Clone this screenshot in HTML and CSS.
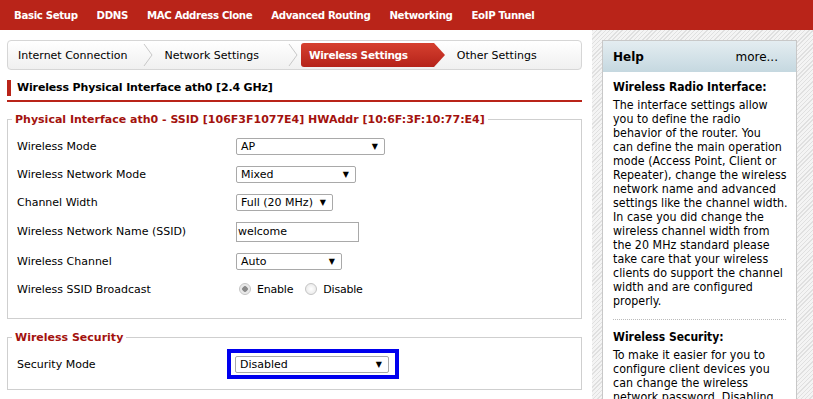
FILE: index.html
```html
<!DOCTYPE html>
<html>
<head>
<meta charset="utf-8">
<link rel="stylesheet" href="styles.css">
</head>
<body>
<div class="topnav">
  <a>Basic Setup</a>
  <a>DDNS</a>
  <a>MAC Address Clone</a>
  <a>Advanced Routing</a>
  <a>Networking</a>
  <a>EoIP Tunnel</a>
</div>
<div class="layout">
  <div class="main">
    <div class="crumbs">
      <span class="crumb c1">Internet Connection</span>
      <svg class="chev" width="10" height="26" viewBox="0 0 10 26"><polyline points="1,2 9,13 1,24" fill="none" stroke="#c8c8c8" stroke-width="1"/></svg>
      <span class="crumb c2">Network Settings</span>
      <svg class="chev" width="10" height="26" viewBox="0 0 10 26"><polyline points="1,2 9,13 1,24" fill="none" stroke="#c8c8c8" stroke-width="1"/></svg>
      <span class="active">
        <span class="active-body">Wireless Settings</span>
        <svg class="active-tip" width="12" height="24" viewBox="0 0 12 24"><defs><linearGradient id="tg" x1="0" y1="0" x2="0" y2="1"><stop offset="0" stop-color="#d6402f"/><stop offset="1" stop-color="#b5231a"/></linearGradient></defs><polygon points="0,0 1,0 12,12 1,24 0,24" fill="url(#tg)"/></svg>
      </span>
      <span class="crumb c4">Other Settings</span>
    </div>

    <h2 class="heading">Wireless Physical Interface ath0 [2.4 GHz]</h2>

    <fieldset class="fs fs1">
      <legend>Physical Interface ath0 - SSID [106F3F1077E4] HWAddr [10:6F:3F:10:77:E4]</legend>
      <div class="row"><span class="label">Wireless Mode</span><span class="sel w149"><span>AP</span><span class="arr">▼</span></span></div>
      <div class="row"><span class="label">Wireless Network Mode</span><span class="sel w120"><span>Mixed</span><span class="arr">▼</span></span></div>
      <div class="row"><span class="label">Channel Width</span><span class="sel w97"><span>Full (20 MHz)</span><span class="arr">▼</span></span></div>
      <div class="row r-input"><span class="label">Wireless Network Name (SSID)</span><span class="txt">welcome</span></div>
      <div class="row"><span class="label">Wireless Channel</span><span class="sel w106"><span>Auto</span><span class="arr">▼</span></span></div>
      <div class="row"><span class="label">Wireless SSID Broadcast</span>
        <span class="radios"><span class="radio on"></span><span class="rlabel">Enable</span><span class="radio"></span><span class="rlabel">Disable</span></span>
      </div>
    </fieldset>

    <fieldset class="fs fs2">
      <legend>Wireless Security</legend>
      <div class="row"><span class="label">Security Mode</span><span class="focus"><span class="sel w154"><span>Disabled</span><span class="arr">▼</span></span></span></div>
    </fieldset>
  </div>
  <div class="side">
    <div class="help">
      <div class="help-head"><b>Help</b><span>more...</span></div>
      <div class="help-body">
        <h3>Wireless Radio Interface:</h3>
        <p>The interface settings allow<br>you to define the radio<br>behavior of the router. You<br>can define the main operation<br>mode (Access Point, Client or<br>Repeater), change the wireless<br>network name and advanced<br>settings like the channel width.<br>In case you did change the<br>wireless channel width from<br>the 20 MHz standard please<br>take care that your wireless<br>clients do support the channel<br>width and are configured<br>properly.</p>
        <hr>
        <h3>Wireless Security:</h3>
        <p>To make it easier for you to<br>configure client devices you<br>can change the wireless<br>network password. Disabling<br>security is not recommended.</p>
      </div>
    </div>
  </div>
</div>
</body>
</html>
```

FILE: styles.css
```css
html, body {
  margin: 0;
  padding: 0;
  background: #fff;
  overflow: hidden;
}
body {
  font-family: "DejaVu Sans", Verdana, sans-serif;
  font-size: 11px;
  color: #000;
  width: 813px;
  height: 399px;
}
.topnav {
  height: 30px;
  background: #b92419;
  display: flex;
  align-items: center;
  padding-left: 14px;
}
.topnav a {
  color: #fff;
  font-weight: bold;
  font-size: 10.2px;
  letter-spacing: -0.35px;
  margin-right: 19px;
}
.layout {
  display: flex;
  height: 369px;
}
.main {
  width: 575px;
  margin-left: 7px;
  padding-top: 10px;
}
.side {
  width: 221px;
  margin-left: 10px;
  padding: 10px 0 0 10px;
  box-sizing: border-box;
  background: repeating-linear-gradient(-45deg, #f4f4f4 0 2px, #e0e0e0 2px 3px);
}
.crumbs {
  height: 30px;
  box-sizing: border-box;
  border: 1px solid #d6d6d6;
  border-radius: 4px;
  background: linear-gradient(#ffffff, #f0f0f0);
  display: flex;
  align-items: center;
  padding-left: 10px;
}
.crumb { white-space: nowrap; }
.c1 { margin-right: 16px; }
.chev { flex: none; }
.c2 { margin-left: 11px; margin-right: 29px; }
.active {
  display: flex;
  align-items: center;
  margin-left: 3px;
}
.active-body {
  background: linear-gradient(#d6402f, #b5231a);
  color: #fff;
  font-weight: bold;
  font-size: 10.5px;
  height: 24px;
  line-height: 24px;
  padding: 0 25px 0 8px;
  border-radius: 3px 0 0 3px;
  letter-spacing: -0.3px;
}
.active-tip { margin-left: 0; flex: none; }
.c4 { margin-left: 12px; }

.heading {
  margin: 10px 0 0 0;
  font-size: 11px;
  font-weight: bold;
  letter-spacing: -0.15px;
  height: 16px;
  line-height: 16px;
  padding: 0 0 4px 10px;
  border-bottom: 2px solid #b92419;
  background: linear-gradient(#b92419, #b92419) no-repeat 0 0 / 4px 16px;
}
.fs {
  border: 1px solid #cfcfcf;
  margin: 0;
  padding: 0 0 0 9px;
}
.fs legend {
  color: #a3120e;
  font-weight: bold;
  padding: 0 3px;
  margin-left: -5px;
}
.fs1 { margin-top: 11px; padding-top: 6px; padding-bottom: 15px; }
.fs2 { margin-top: 12px; padding-top: 6px; padding-bottom: 11px; }
.row {
  display: flex;
  align-items: center;
  height: 28px;
}
.r-input { height: 31px; }
.label { width: 219px; flex: none; }
.sel {
  display: flex;
  justify-content: space-between;
  align-items: center;
  height: 17px;
  box-sizing: border-box;
  border: 1px solid #a9a9a9;
  border-radius: 2px;
  background: #fff;
  padding: 0 6px 0 4px;
}
.arr { font-size: 8px; }
.w149 { width: 149px; }
.w120 { width: 120px; }
.w97 { width: 97px; }
.w106 { width: 106px; }
.w154 { width: 154px; }
.txt {
  width: 123px;
  height: 20px;
  box-sizing: border-box;
  border: 1px solid #a9a9a9;
  padding: 1px 1px;
  line-height: 16px;
}
.radios { display: flex; align-items: center; margin-left: 3px; }
.radio {
  width: 12px;
  height: 12px;
  border-radius: 50%;
  box-sizing: border-box;
  border: 1px solid #c4c4c4;
  background: radial-gradient(#ffffff, #e4e4e4);
  display: inline-block;
}
.radio.on {
  background: radial-gradient(circle, #8a8a8a 0 2.5px, #e4e4e4 3px, #f4f4f4);
}
.rlabel { margin-left: 6px; margin-right: 12px; letter-spacing: -0.2px; }
.focus {
  border: 4px solid #0000ee;
  padding: 3px 6px 2px 4px;
  margin-left: -9px;
  display: flex;
}

.help {
  width: 195px;
  border: 1px solid #c8c8c8;
  background: #fff;
  height: 400px;
  box-sizing: border-box;
}
.help-head {
  height: 31px;
  background: linear-gradient(#e4edf1, #c5d8e0);
  display: flex;
  justify-content: space-between;
  align-items: center;
  padding: 0 18px 0 10px;
  font-size: 12px;
}
.help-body {
  padding: 8px 6px 0 10px;
  font-family: "DejaVu Sans Condensed", "DejaVu Sans", sans-serif;
}
.help-body h3 {
  font-size: 12px;
  margin: 0 0 4px 0;
  line-height: 14px;
}
.help-body p {
  margin: 0;
  line-height: 14px;
  font-size: 12.3px;
  letter-spacing: 0.05px;
  white-space: nowrap;
}
.help-body hr {
  border: none;
  border-top: 1px dotted #bbb;
  margin: 11px 4px 10px 0;
}
```
